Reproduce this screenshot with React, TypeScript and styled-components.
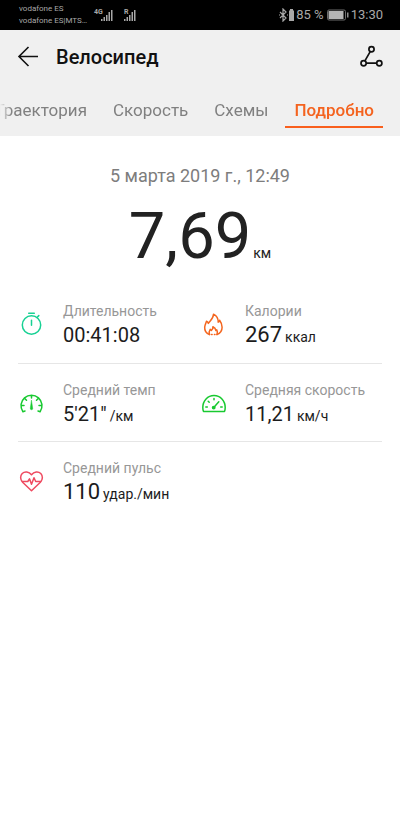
import React from "react";
import styled, { createGlobalStyle } from "styled-components";

const GlobalStyle = createGlobalStyle`
  * { box-sizing: border-box; }
  body { margin: 0; background: #fff; color: #212121; font-family: Roboto, "Noto Sans", sans-serif; }
  h1, h2, p, dl, dt, dd { margin: 0; font-weight: 400; }
  button { font: inherit; color: inherit; background: none; border: 0; padding: 0; cursor: pointer; }
  svg { display: block; flex: none; }
`;

const StatusBar = styled.div`
  display: flex;
  align-items: center;
  height: 30px;
  padding: 0 17px 0 19px;
  background: #000;
  color: #a8a8a8;
`;

const Carriers = styled.div`
  width: 74px;
  font-size: 8px;
  line-height: 12px;
  white-space: nowrap;
`;

const Signals = styled.div`
  display: flex;
  gap: 8px;
  flex: 1;
`;

const StatusInfo = styled.div`
  display: flex;
  align-items: center;
  font-size: 13px;
  line-height: 16px;
  white-space: nowrap;
`;

const Clock = styled.time`
  margin-left: 2px;
`;

const BatteryText = styled.span`
  margin: 0 3px 0 1px;
`;

const Header = styled.header`
  background: #f0f0f0;
`;

const TitleBar = styled.div`
  display: flex;
  align-items: center;
  height: 54px;
  padding: 0 16px;
`;

const Title = styled.h1`
  flex: 1;
  padding-left: 16px;
  font-size: 20px;
  line-height: 24px;
  font-weight: 500;
  color: #111;
`;

const Tabs = styled.div`
  display: flex;
  justify-content: flex-end;
  gap: 8px;
  height: 52px;
  padding: 10px 17px 0 0;
  overflow: hidden;
  mask-image: linear-gradient(to right, transparent 0, #000 12px);
`;

const Tab = styled.button<{ $active?: boolean }>`
  && {
    flex: none;
    height: 34px;
    padding: 0 9px;
    border-bottom: 2px solid ${(p) => (p.$active ? "#f95f1d" : "transparent")};
    color: ${(p) => (p.$active ? "#f4631f" : "#808080")};
    font-size: 17px;
    line-height: 32px;
    font-weight: ${(p) => (p.$active ? 500 : 400)};
  }
`;

const Summary = styled.section`
  display: flex;
  flex-direction: column;
  align-items: center;
  padding-top: 28px;
`;

const DateText = styled.p`
  font-size: 18px;
  line-height: 24px;
  color: #7d7d7d;
`;

const Distance = styled.p`
  padding-top: 8px;
  font-size: 65px;
  line-height: 80px;
  color: #222;
`;

const DistanceUnit = styled.span`
  padding-left: 2px;
  font-size: 14px;
  line-height: 1;
`;

const Metrics = styled.dl`
  padding: 9px 18px 0;
`;

const MetricRow = styled.div`
  display: grid;
  grid-template-columns: 1fr 1fr;
  align-items: center;
  height: 78px;
  padding-top: 2px;
  & + & { border-top: 1px solid #e6e6e6; }
`;

const Metric = styled.div`
  display: grid;
  grid-template-columns: 45px 1fr;
  align-items: center;
  white-space: nowrap;
`;

const MetricIcon = styled.div`
  grid-row: 1 / 3;
`;

const Label = styled.dt`
  font-size: 14px;
  line-height: 20px;
  color: #979797;
`;

const Value = styled.dd<{ $large?: boolean }>`
  font-size: ${(p) => (p.$large ? 22 : 20)}px;
  line-height: 28px;
  color: #1c1c1c;
`;

const Unit = styled.span`
  padding-left: 3px;
  font-size: 14px;
  line-height: 1;
`;

const SignalIcon = ({ label }: { label?: string }) => (
  <svg
    width={label ? 22 : 15}
    height="14"
    viewBox={label ? "0 0 22 14" : "7 0 15 14"}
    fill="#a8a8a8"
    aria-hidden="true"
  >
    {label ? (
      <text x="1" y="6" fontSize="7" fontWeight="700">{label}</text>
    ) : (
      <text x="8" y="6" fontSize="7" fontWeight="700">R</text>
    )}
    <path d="M8 11h1.500v2H8zM10.500 9H12v4h-1.500zM13 7h1.500v6H13zM15.500 4H17v9h-1.500zM18 2h1.500v11H18z" />
  </svg>
);

const BluetoothIcon = () => (
  <svg width="16" height="14" viewBox="0 0 16 14" aria-hidden="true">
    <path d="M1 4l6 6-3 3V1l3 3-6 6M0 7h1M8 7h1" fill="none" stroke="#a8a8a8" strokeWidth="1.200" />
    <path d="M11 1h3v1.500h1V13h-5V2.500h1z" fill="#a8a8a8" />
  </svg>
);

const BatteryIcon = () => (
  <svg width="22" height="12" viewBox="0 0 22 12" aria-hidden="true">
    <rect x="0.500" y="1" width="18" height="10" rx="1.500" fill="none" stroke="#6c6c6c" />
    <rect x="1.500" y="2" width="15" height="8" fill="#b4b4b4" />
    <path d="M20 3.500h1.500v5H20z" fill="#8c8c8c" />
  </svg>
);

const BackIcon = () => (
  <svg width="24" height="24" viewBox="0 0 24 24" fill="none" stroke="#111" strokeWidth="1.600" aria-hidden="true">
    <path d="M22 11.500H3M12.500 2L3 11.500l9.500 9.500" />
  </svg>
);

const RouteIcon = () => (
  <svg width="24" height="24" viewBox="0 0 24 24" fill="none" stroke="#111" strokeWidth="1.700" aria-hidden="true">
    <circle cx="11.500" cy="4.300" r="2.600" />
    <circle cx="3.600" cy="18.200" r="2.600" />
    <circle cx="19.300" cy="18.200" r="2.600" />
    <path d="M10.200 6.600L4.900 15.900M6.200 18.200h10.500" />
  </svg>
);

const IconFrame = styled.svg.attrs({ width: 26, height: 26, viewBox: "0 1 26 26", fill: "none", "aria-hidden": true })`
  stroke-width: 1.5;
  stroke-linecap: round;
  stroke-linejoin: round;
`;

const TimerIcon = () => (
  <IconFrame stroke="#18d194">
    <circle cx="13.500" cy="14" r="9.200" />
    <path d="M10.700 2.200h5.600M13.500 9.300v5M19.200 6.200l1.600-1.600" />
  </IconFrame>
);

const FlameIcon = () => (
  <IconFrame stroke="#f4661f">
    <path d="M9.500 23.500C6 22.200 4.500 19.500 4.700 16.200 4.800 13.800 6 12.400 6.500 10.200c1 .5 1.500 1.200 1.800 2.200C10 9.800 13.500 7.500 13.500 3.200c3 1.500 4.800 4.400 4.700 8 .8-.4 1.200-1 1.400-1.900 1.500 2 2.500 4.500 2.500 7 0 3.500-1.800 6-5.100 7.200" />
    <path d="M9.500 23.500c-.8-1.800-.3-3.700.7-5.200l1.200 1.200c1-1 1.700-2 1.500-3.700 2 .9 2.800 2.300 3 3.800l.9-.7c.8 1.600.8 3.200.2 4.600M11.500 23.500h.6M14.400 23.500h.6" />
  </IconFrame>
);

const PaceIcon = () => (
  <IconFrame stroke="#18c930">
    <path d="M7 21l-2.100.7A10.500 10.500 0 1 1 22.100 21.700L20 21M13.500 5.500v2.500M7 8.700l1.500 1.500M20 8.700l-1.500 1.500M3.500 15.500h2.500M21 15.500h2.500" />
    <path d="M13.500 10.500l1.200 8a1.200 1.200 0 0 1-2.400 0z" fill="#18c930" strokeWidth="0.500" />
  </IconFrame>
);

const SpeedIcon = () => (
  <IconFrame stroke="#18c930">
    <path d="M3.500 21.500h21c.5-1.300.7-2.500.7-4C25.200 10.800 20.300 5.500 14 5.500S2.800 10.800 2.800 17.500c0 1.500.2 2.700.7 4zM14 8.500v1.300M8.200 11.200l1 1M5.800 17h1.500M20.700 17h1.500" />
    <path d="M14 17.300l4.800-5.500" />
    <circle cx="13.700" cy="17.600" r="1.200" fill="#18c930" />
  </IconFrame>
);

const PulseIcon = () => (
  <IconFrame stroke="#ef4a60">
    <path d="M13.500 22.800L4.600 14.200C2.100 11.600 2 7.800 4.200 5.500 6.700 3 10.900 3.400 13.500 6.800 16.100 3.400 20.300 3 22.800 5.500c2.200 2.300 2.100 6.100-.4 8.700z" />
    <path d="M4.300 13.500h5.500l1.700-2.700 2 5.500 2.500-6.500 1.700 3.700h5" />
  </IconFrame>
);

type MetricData = { label: string; value: string; unit?: string; icon: React.ReactNode; large?: boolean };

const rows: MetricData[][] = [
  [
    { label: "Длительность", value: "00:41:08", icon: <TimerIcon /> },
    { label: "Калории", value: "267", unit: "ккал", icon: <FlameIcon />, large: true },
  ],
  [
    { label: "Средний темп", value: "5'21\"", unit: "/км", icon: <PaceIcon /> },
    { label: "Средняя скорость", value: "11,21", unit: "км/ч", icon: <SpeedIcon /> },
  ],
  [{ label: "Средний пульс", value: "110", unit: "удар./мин", icon: <PulseIcon />, large: true }],
];

const tabs = ["Траектория", "Скорость", "Схемы", "Подробно"];

export default function App() {
  return (
    <>
      <GlobalStyle />
      <StatusBar>
        <Carriers>
          <div>vodafone ES</div>
          <div>vodafone ES|MTS…</div>
        </Carriers>
        <Signals>
          <SignalIcon label="4G" />
          <SignalIcon />
        </Signals>
        <StatusInfo>
          <BluetoothIcon />
          <BatteryText>85 %</BatteryText>
          <BatteryIcon />
          <Clock>13:30</Clock>
        </StatusInfo>
      </StatusBar>
      <Header>
        <TitleBar>
          <button type="button" aria-label="Назад"><BackIcon /></button>
          <Title>Велосипед</Title>
          <button type="button" aria-label="Маршрут"><RouteIcon /></button>
        </TitleBar>
        <Tabs role="tablist">
          {tabs.map((name) => {
            const active = name === "Подробно";
            return (
              <Tab key={name} type="button" role="tab" aria-selected={active} $active={active}>
                {name}
              </Tab>
            );
          })}
        </Tabs>
      </Header>
      <main>
        <Summary>
          <DateText>5 марта 2019 г., 12:49</DateText>
          <Distance>7,69<DistanceUnit>км</DistanceUnit></Distance>
        </Summary>
        <Metrics>
          {rows.map((row) => (
            <MetricRow key={row[0].label}>
              {row.map((m) => (
                <Metric key={m.label}>
                  <MetricIcon>{m.icon}</MetricIcon>
                  <Label>{m.label}</Label>
                  <Value $large={m.large}>
                    {m.value}
                    {m.unit && <Unit>{m.unit}</Unit>}
                  </Value>
                </Metric>
              ))}
            </MetricRow>
          ))}
        </Metrics>
      </main>
    </>
  );
}
